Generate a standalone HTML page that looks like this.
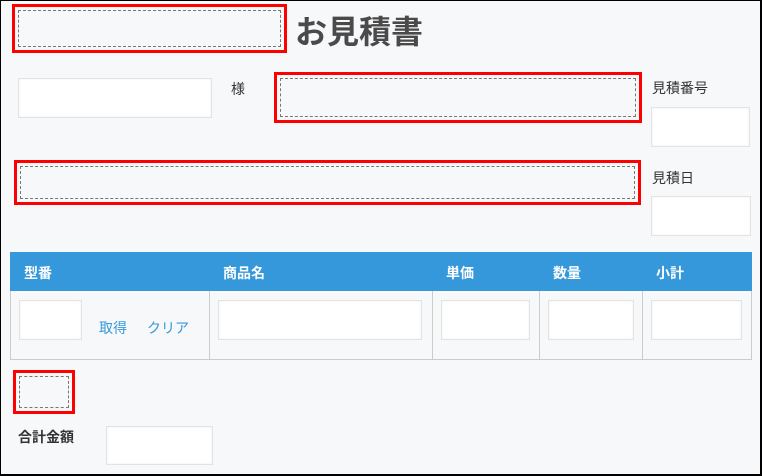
<!DOCTYPE html>
<html><head><meta charset="utf-8"><style>
*{margin:0;padding:0;box-sizing:border-box}
body{width:762px;height:476px;background:#f7f8fa;position:relative;overflow:hidden;font-family:"Liberation Sans","Noto Sans CJK JP",sans-serif;color:#333}
.frame{position:absolute;left:0;top:0;width:762px;height:476px;border:1px solid #000;border-right:2px solid #000;border-bottom:2px solid #000}
.a{position:absolute}
.red{border:3px solid #f00}
.red>i{position:absolute;left:3px;top:3px;right:3px;bottom:3px;border:1px dashed #777}
.in{background:#fff;border:1px solid #e3e3e3;box-shadow:inset 0 0 2px #eee}
.t{font-size:14px;color:#333}
.hd{font-size:14px;color:#fff;font-weight:bold;top:263px}
.lnk{font-size:14px;color:#3598db}
</style></head><body>
<div class="frame"></div>
<div class="a red" style="left:12px;top:4px;width:275px;height:49px"><i></i></div>
<div class="a" style="left:295px;top:11px;font-size:32px;font-weight:bold;color:#4a4a4a;line-height:42px">お見積書</div>
<div class="a in" style="left:18px;top:78px;width:194px;height:40px"></div>
<div class="a t" style="left:231px;top:79px">様</div>
<div class="a red" style="left:274px;top:72px;width:368px;height:51px"><i></i></div>
<div class="a t" style="left:652px;top:78px">見積番号</div>
<div class="a in" style="left:651px;top:107px;width:99px;height:40px"></div>
<div class="a red" style="left:14px;top:160px;width:627px;height:45px"><i></i></div>
<div class="a t" style="left:652px;top:168px">見積日</div>
<div class="a in" style="left:651px;top:196px;width:100px;height:40px"></div>
<div class="a" style="left:10px;top:252px;width:742px;height:39px;background:#3598db"></div>
<div class="a hd" style="left:24px">型番</div>
<div class="a hd" style="left:223px">商品名</div>
<div class="a hd" style="left:446px">単価</div>
<div class="a hd" style="left:553px">数量</div>
<div class="a hd" style="left:656px">小計</div>
<div class="a" style="left:10px;top:291px;width:742px;height:69px;border:1px solid #ccc;border-top:none"></div>
<div class="a" style="left:209px;top:291px;width:1px;height:68px;background:#ccc"></div>
<div class="a" style="left:432px;top:291px;width:1px;height:68px;background:#ccc"></div>
<div class="a" style="left:539px;top:291px;width:1px;height:68px;background:#ccc"></div>
<div class="a" style="left:642px;top:291px;width:1px;height:68px;background:#ccc"></div>
<div class="a in" style="left:19px;top:300px;width:63px;height:40px"></div>
<div class="a lnk" style="left:99px;top:318px">取得</div>
<div class="a lnk" style="left:147px;top:318px">クリア</div>
<div class="a in" style="left:218px;top:300px;width:204px;height:40px"></div>
<div class="a in" style="left:441px;top:300px;width:89px;height:40px"></div>
<div class="a in" style="left:548px;top:300px;width:86px;height:40px"></div>
<div class="a in" style="left:651px;top:300px;width:91px;height:40px"></div>
<div class="a red" style="left:13px;top:370px;width:62px;height:44px"><i></i></div>
<div class="a t" style="left:18px;top:427px;font-weight:bold">合計金額</div>
<div class="a in" style="left:106px;top:426px;width:107px;height:39px"></div>
</body></html>
